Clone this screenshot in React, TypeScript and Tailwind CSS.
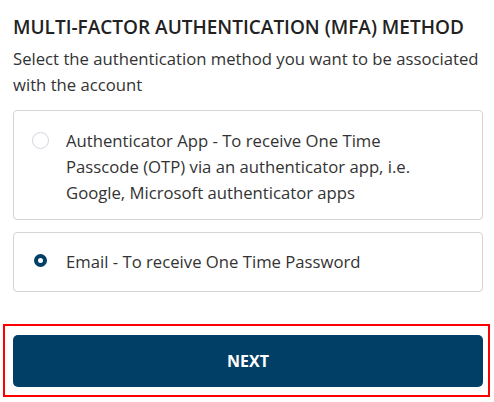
import React from "react";

export default function App() {
  return (
    <div className="w-[494px] h-[402px] bg-white overflow-hidden" style={{ fontFamily: '"Open Sans", sans-serif' }}>
      <div className="pl-[13px] pt-[14px]">
        <h1 className="text-[19px] leading-[26px] font-semibold text-[#222]">
          MULTI-FACTOR AUTHENTICATION (MFA) METHOD
        </h1>
        <p className="mt-[6px] w-[478px] text-[16.7px] leading-[26px] text-[#333]">
          Select the authentication method you want to be associated with the account
        </p>
        <div className="mt-[12px] flex flex-col gap-[12px] w-[470px]">
          <label className="flex items-start h-[110px] border border-[#d4d4d4] rounded-[4px] pl-[18px] pt-[17px]">
            <span className="mt-[4px] w-[17px] h-[17px] rounded-full border border-[#cfd5de] bg-white shrink-0" />
            <span className="ml-[17px] w-[385px] text-[16.7px] leading-[26px] text-[#333]">
              Authenticator App - To receive One Time Passcode (OTP) via an authenticator app, i.e. Google, Microsoft authenticator apps
            </span>
          </label>
          <label className="flex items-center border border-[#d4d4d4] rounded-[4px] pl-[20px] pr-[12px] h-[60px]">
            <span className="mb-[4px] w-[13px] h-[13px] rounded-full border-[4px] border-[#023f66] bg-white shrink-0" />
            <span className="ml-[19px] text-[16.7px] leading-[26px] text-[#333]">
              Email - To receive One Time Password
            </span>
          </label>
        </div>
      </div>
      <div className="mt-[32px] mx-[3px] w-[487px] h-[73px] border-2 border-[#ff0000] px-[8px] pt-[9px]">
        <button className="w-[470px] h-[52px] rounded-[5px] bg-[#023f66] text-white text-[16px] font-bold">
          NEXT
        </button>
      </div>
    </div>
  );
}
